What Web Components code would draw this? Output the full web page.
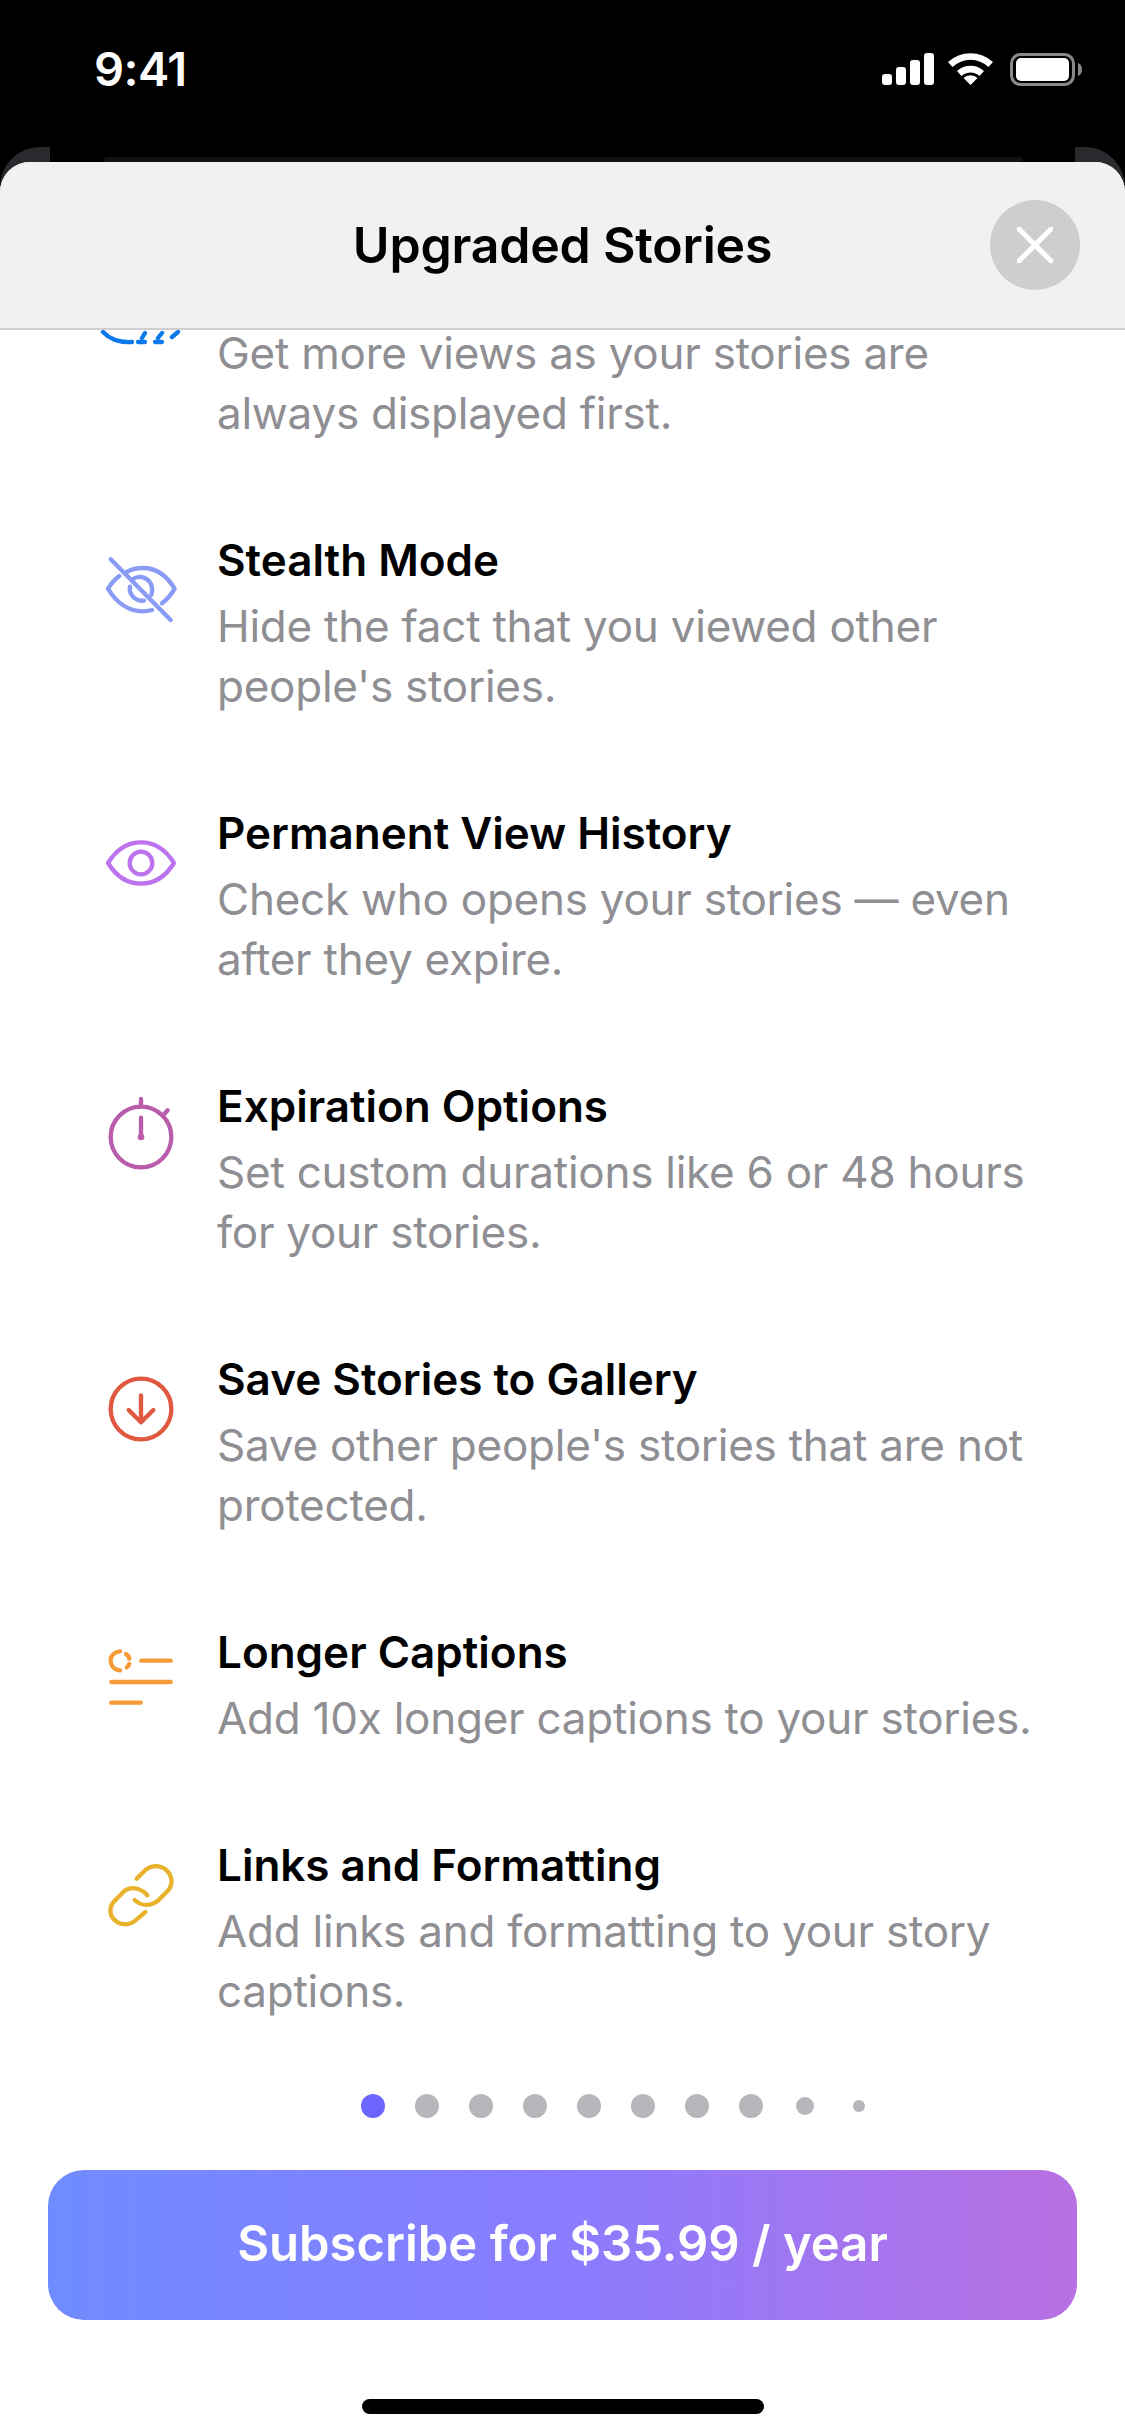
<!DOCTYPE html>
<html>
<head>
<meta charset="utf-8">
<title>Upgraded Stories</title>
<style>
  html, body { margin: 0; padding: 0; background: #000; }
  body { font-family: Inter, 'Liberation Sans', sans-serif; }
</style>
</head>
<body>
<upgrade-sheet>
  <feature-row>
    <svg slot="icon" viewBox="0 0 360 360" style="stroke:#0a7aea"><g style="fill:none;stroke-width:13;stroke-linecap:round">
      <path d="M69 225Q100 258 156 255"/>
      <path d="M174 255h21M225 255h21M186 243l9-15M234 243l12-15M276 240l18-15"/>
    </g></svg>
    Get more views as your stories are always displayed first.
  </feature-row>
  <feature-row>
    <svg slot="icon" viewBox="0 24 360 360" style="stroke:#8a9bf5"><g style="fill:none;stroke-width:13;stroke-linecap:round;stroke-linejoin:round">
      <path d="M92 112 272 294"/>
      <path d="M118 162C104 172 94 184 84 200c26 44 64 68 104 68 10 0 20-2 28-4"/>
      <path d="M140 150c14-8 30-12 48-12 40 0 72 22 96 62-10 18-22 32-38 44"/>
      <path d="M158 172c16-12 38-8 50 6 10 12 10 30 6 40"/>
      <path d="M150 194c-4 22 14 44 42 42"/>
    </g></svg>
    <span slot="title">Stealth Mode</span>
    Hide the fact that you viewed other people's stories.
  </feature-row>
  <feature-row>
    <svg slot="icon" viewBox="0 0 360 360" style="stroke:#bd72ee"><g style="fill:none;stroke-width:13;stroke-linecap:round;stroke-linejoin:round">
      <path d="M84 180c26-42 60-62 99-62s73 20 99 62c-26 42-60 62-99 62s-73-20-99-62z"/>
      <circle cx="183" cy="180" r="34"/>
    </g></svg>
    <span slot="title">Permanent View History</span>
    Check who opens your stories — even after they expire.
  </feature-row>
  <feature-row>
    <svg slot="icon" viewBox="0 -21 360 360" style="stroke:#b85cab"><g style="fill:none;stroke-width:13;stroke-linecap:round">
      <circle cx="183" cy="162" r="91"/>
      <path d="M183 48v22M250 96l13-14"/>
      <path d="M183 104v58"/>
    </g><circle cx="183" cy="162" r="10" fill="#b85cab" stroke="none"/></svg>
    <span slot="title">Expiration Options</span>
    Set custom durations like 6 or 48 hours for your stories.
  </feature-row>
  <feature-row>
    <svg slot="icon" viewBox="0 -9 360 360" style="stroke:#e0583f"><g style="fill:none;stroke-width:13;stroke-linecap:round;stroke-linejoin:round">
      <circle cx="183" cy="171" r="91"/>
      <path d="M183 130v80M146 174l37 37 37-37"/>
    </g></svg>
    <span slot="title">Save Stories to Gallery</span>
    Save other people's stories that are not protected.
  </feature-row>
  <feature-row>
    <svg slot="icon" viewBox="0 0 360 360" style="stroke:#f79a38"><g style="fill:none;stroke-width:13;stroke-linecap:round">
      <path d="M120 145C98 142 92 126 92 116c0-14 10-26 28-28"/>
      <path d="M138 96c6 4 10 10 10 14M148 126c-2 4-4 8-8 10"/>
      <path d="M184 116h88M94 180h178M94 242h88"/>
    </g></svg>
    <span slot="title">Longer Captions</span>
    Add 10x longer captions to your stories.
  </feature-row>
  <feature-row>
    <svg slot="icon" viewBox="0 3 360 360" style="stroke:#e8b32a"><g style="fill:none;stroke-width:13;stroke-linecap:round;stroke-linejoin:round">
      <path d="M170 134l26-26c26-20 56-12 70 8 14 20 10 44-6 58l-28 28c-20 14-46 16-68-4"/>
      <path d="M202 184c-14-18-44-30-68-14l-30 30c-18 18-16 44 0 58 18 18 46 16 64 0l28-24"/>
    </g></svg>
    <span slot="title">Links and Formatting</span>
    Add links and formatting to your story captions.
  </feature-row>
</upgrade-sheet>

<script>
const statusTemplate = document.createElement('template')
statusTemplate.innerHTML = `
  <style>
    :host { display: flex; justify-content: space-between; box-sizing: border-box; height: 147px; padding: 45px 43px 0 94px; color: #fff; }
    #time { font-size: 47px; font-weight: 600; line-height: 48px; letter-spacing: -0.5px; }
    svg { display: block; width: 200px; height: 40px; margin-top: 5px; }
  </style>
  <span id="time">9:41</span>
  <svg viewBox="882 50 200 40" fill="#fff">
    <rect x="882" y="74" width="10" height="11" rx="3"/>
    <rect x="896" y="67" width="10" height="18" rx="3"/>
    <rect x="910" y="60" width="10" height="25" rx="3"/>
    <rect x="924" y="53" width="10" height="32" rx="3"/>
    <path d="M948 62a33 33 0 0 1 45 0l-4.500 5a26 26 0 0 0-36 0z"/>
    <path d="M957 71a20 20 0 0 1 27 0l-4.500 5a13 13 0 0 0-18 0z"/>
    <path d="M970.500 85l-7-7a10 10 0 0 1 14 0z"/>
    <rect x="1011.500" y="54.500" width="62" height="30" rx="9" fill="none" stroke="#8a8a8a" stroke-width="3"/>
    <rect x="1016" y="58" width="53" height="23" rx="5"/>
    <path d="M1078 63c3 1 4 4 4 6.500s-1 5.500-4 6.500z" fill="#8a8a8a"/>
  </svg>
`

customElements.define('status-bar',
  class extends HTMLElement {
    constructor () {
      super()
      this.attachShadow({ mode: 'open' })
        .appendChild(statusTemplate.content.cloneNode(true))
    }
  }
)

const headerTemplate = document.createElement('template')
headerTemplate.innerHTML = `
  <style>
    :host { display: grid; grid-template-columns: 1fr auto 1fr; align-items: center; box-sizing: border-box; height: 168px; background: #f1f1f2; border-bottom: 2px solid #cfcfd1; color: #000; }
    h1 { grid-column: 2; margin: 0; font-size: 50px; font-weight: 600; letter-spacing: -0.2px; }
    #close { grid-column: 3; justify-self: end; display: flex; align-items: center; justify-content: center; width: 90px; height: 90px; margin-right: 45px; padding: 0; border: none; border-radius: 50%; background: #cecece; }
    #close svg { width: 36px; height: 36px; }
  </style>
  <h1><slot></slot></h1>
  <button id="close" aria-label="Close">
    <svg viewBox="0 0 36 36" fill="none" stroke="#fff" stroke-width="5" stroke-linecap="round"><path d="M2 2l32 32M34 2L2 34"/></svg>
  </button>
`

customElements.define('sheet-header',
  class extends HTMLElement {
    constructor () {
      super()
      this.attachShadow({ mode: 'open' })
        .appendChild(headerTemplate.content.cloneNode(true))
    }
  }
)

const rowTemplate = document.createElement('template')
rowTemplate.innerHTML = `
  <style>
    :host { display: flex; align-items: flex-start; gap: 17px; padding: 43px 78px 44px 80px; }
    ::slotted(svg) { flex: none; width: 120px; height: 120px; }
    #text { flex: 1; }
    #title { min-height: 60px; margin-bottom: 6px; font-size: 44px; font-weight: 600; line-height: 60px; color: #000; }
    #desc { font-size: 44px; line-height: 60px; color: #8e8e93; letter-spacing: -0.25px; }
  </style>
  <slot name="icon"></slot>
  <div id="text">
    <div id="title"><slot name="title"></slot></div>
    <div id="desc"><slot></slot></div>
  </div>
`

customElements.define('feature-row',
  class extends HTMLElement {
    constructor () {
      super()
      this.attachShadow({ mode: 'open' })
        .appendChild(rowTemplate.content.cloneNode(true))
    }
  }
)

const dotsTemplate = document.createElement('template')
dotsTemplate.innerHTML = `
  <style>
    :host { display: flex; align-items: center; justify-content: center; height: 24px; padding-left: 106px; }
    span { flex: none; width: 54px; display: flex; justify-content: center; }
    i { display: block; width: 24px; height: 24px; border-radius: 50%; background: #b6b6bb; }
    i.active { background: #6c66ff; }
    i.small { width: 18px; height: 18px; }
    i.tiny { width: 12px; height: 12px; }
  </style>
  <span><i class="active"></i></span><span><i></i></span><span><i></i></span><span><i></i></span>
  <span><i></i></span><span><i></i></span><span><i></i></span><span><i></i></span>
  <span><i class="small"></i></span><span><i class="tiny"></i></span>
`

customElements.define('page-dots',
  class extends HTMLElement {
    constructor () {
      super()
      this.attachShadow({ mode: 'open' })
        .appendChild(dotsTemplate.content.cloneNode(true))
    }
  }
)

const subscribeTemplate = document.createElement('template')
subscribeTemplate.innerHTML = `
  <style>
    :host { display: block; }
    button { display: block; width: 100%; height: 150px; padding: 0 0 3px; border: none; border-radius: 36px; background: linear-gradient(90deg, #6f8cff 0%, #8a7cff 50%, #b870e2 100%); color: #fff; font: 600 49px Inter, 'Liberation Sans', sans-serif; }
  </style>
  <button><slot></slot></button>
`

customElements.define('subscribe-button',
  class extends HTMLElement {
    constructor () {
      super()
      this.attachShadow({ mode: 'open' })
        .appendChild(subscribeTemplate.content.cloneNode(true))
    }
  }
)

const sheetTemplate = document.createElement('template')
sheetTemplate.innerHTML = `
  <style>
    :host { display: flex; flex-direction: column; width: 1125px; height: 2436px; background: #000; overflow: hidden; }
    #behind { flex: none; height: 15px; display: flex; justify-content: space-between; }
    #behind i { width: 50px; height: 60px; background: #2a2a2e; }
    #behind i:first-child { border-top-left-radius: 40px; }
    #behind i:last-child { border-top-right-radius: 40px; }
    #behind b { width: 920px; height: 5px; margin-top: 10px; border-radius: 20px 20px 0 0; background: #121214; }
    #sheet { flex: 1; min-height: 0; display: flex; flex-direction: column; background: #fff; border-radius: 30px 30px 0 0; overflow: hidden; position: relative; }
    #list { flex: 1; min-height: 0; overflow: hidden; }
    #scroll { margin-top: -116px; }
    #foot { flex: none; display: flex; flex-direction: column; padding: 0 48px; }
    page-dots { margin-bottom: 52px; }
    #home { align-self: center; width: 402px; height: 15px; margin: 79px 0 22px; border-radius: 8px; background: #000; }
  </style>
  <status-bar></status-bar>
  <div id="behind"><i></i><b></b><i></i></div>
  <div id="sheet">
    <sheet-header>Upgraded Stories</sheet-header>
    <div id="list"><div id="scroll"><slot></slot></div></div>
    <div id="foot">
      <page-dots></page-dots>
      <subscribe-button>Subscribe for $35.99 / year</subscribe-button>
      <div id="home"></div>
    </div>
  </div>
`

customElements.define('upgrade-sheet',
  class extends HTMLElement {
    constructor () {
      super()
      this.attachShadow({ mode: 'open' })
        .appendChild(sheetTemplate.content.cloneNode(true))
    }
  }
)
</script>
</body>
</html>
